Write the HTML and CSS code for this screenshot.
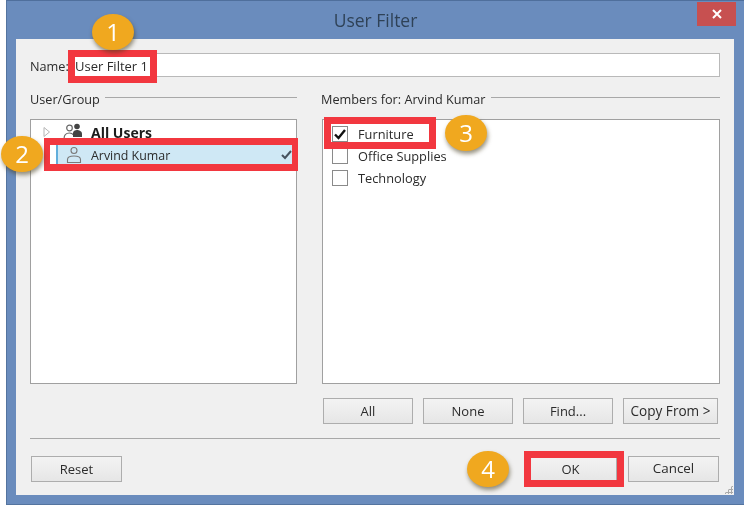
FILE: index.html
```html
<!DOCTYPE html>
<html lang="en">
<head>
<meta charset="utf-8">
<title>User Filter</title>
<link rel="stylesheet" href="styles.css">
</head>
<body>
<div class="window">
  <header class="titlebar">
    <span></span>
    <span class="title">User Filter</span>
    <span class="close">
      <svg width="10" height="10" viewBox="0 0 10 10"><path d="M1 1l8 8M9 1l-8 8" stroke="#fff" stroke-width="2" fill="none"/></svg>
    </span>
  </header>
  <main class="dialog">
    <div class="name-row">
      <label class="name-label">Name:</label>
      <div class="name-input">User Filter 1</div>
    </div>
    <div class="columns">
      <section class="col col-left">
        <div class="legend"><span>User/Group</span><i class="rule"></i></div>
        <div class="list tree">
          <div class="row">
            <svg class="arrow" width="8" height="12" viewBox="0 0 8 12"><path d="M1 1.5l5.5 4.5L1 10.5z" fill="#fff" stroke="#b5b5b5"/></svg>
            <svg class="group-icon" width="22" height="18" viewBox="0 0 22 18"><circle cx="6.5" cy="5" r="2.8" fill="none" stroke="#666" stroke-width="1.2"/><path d="M1 16c0-4 2-6 5.500-6 2 0 3 .6 4 2" fill="none" stroke="#666" stroke-width="1.2"/><circle cx="14" cy="3.500" r="2.800" fill="#444"/><path d="M10 14v-4c0-2 2-3 4-3s5 1 5 4v3z" fill="#444"/></svg>
            <b class="all-users">All Users</b>
          </div>
          <div class="row selected">
            <svg class="user-icon" width="16" height="18" viewBox="0 0 16 18"><circle cx="8" cy="4.500" r="3" fill="none" stroke="#7a7a7a" stroke-width="1.100"/><path d="M1.500 16.500v-3c0-2.500 2.500-3.500 6.500-3.500s6.500 1 6.500 3.500v3z" fill="none" stroke="#7a7a7a" stroke-width="1.100"/></svg>
            <span class="user-name">Arvind Kumar</span>
            <svg class="tick" width="11" height="10" viewBox="0 0 11 10"><path d="M1 5l3 3 6-7" fill="none" stroke="#46525e" stroke-width="2"/></svg>
          </div>
        </div>
      </section>
      <section class="col col-right">
        <div class="legend"><span>Members for: Arvind Kumar</span><i class="rule"></i></div>
        <div class="list members">
          <div class="member"><span class="box"><svg width="14" height="13" viewBox="0 0 14 13"><path d="M2 6.500l3.500 3.500L12 2" fill="none" stroke="#111" stroke-width="2.400"/></svg></span>Furniture</div>
          <div class="member"><span class="box"></span>Office Supplies</div>
          <div class="member"><span class="box"></span>Technology</div>
        </div>
        <div class="member-actions">
          <button class="btn">All</button>
          <button class="btn">None</button>
          <button class="btn">Find...</button>
          <button class="btn btn-copy">Copy From &gt;</button>
        </div>
      </section>
    </div>
    <hr class="separator">
    <footer class="footer">
      <button class="btn btn-reset">Reset</button>
      <div class="footer-right">
        <button class="btn btn-ok">OK</button>
        <button class="btn btn-cancel">Cancel</button>
      </div>
    </footer>
    <div class="grip"></div>
  </main>
</div>

<div class="red red-name"></div>
<div class="red red-user"></div>
<div class="red red-member"></div>
<div class="red red-ok"></div>
<div class="badge badge-1">1</div>
<div class="badge badge-2">2</div>
<div class="badge badge-3">3</div>
<div class="badge badge-4">4</div>
</body>
</html>
```

FILE: styles.css
```css
* { box-sizing: border-box; }
html, body { margin: 0; padding: 0; background: #fff; }
body {
  width: 744px;
  height: 506px;
  overflow: hidden;
  position: relative;
  font-family: "Open Sans", "Noto Sans", sans-serif;
  font-size: 12.7px;
  color: #2b2b2b;
  filter: blur(0.35px);
}
.window {
  margin-left: 6px;
  width: 738px;
  height: 505px;
  background: #6a8cbd;
  border: 1px solid #54749f;
  border-right: 0;
  border-top-color: #4f6f9c;
  display: flex;
  flex-direction: column;
}
.titlebar {
  height: 38px;
  flex: none;
  display: grid;
  grid-template-columns: 1fr auto 1fr;
}
.title {
  font-size: 17.5px;
  color: #2f4257;
  line-height: 38px;
}
.close {
  justify-self: end;
  margin: 1px 8px 0 0;
  width: 39px;
  height: 24px;
  background: #c75050;
  display: flex;
  align-items: center;
  justify-content: center;
}
.dialog {
  position: relative;
  margin-left: 9px;
  width: 718px;
  height: 456px;
  background: #f0f0f0;
  padding: 14px 14px 0;
  display: flex;
  flex-direction: column;
}
.name-row {
  display: flex;
  align-items: center;
  height: 24px;
  gap: 4px;
}
.name-label { width: 38px; flex: none; padding-top: 2px; }
.name-input {
  flex: 1;
  height: 24px;
  border: 1px solid #b9b9b9;
  background: #fff;
  line-height: 24px;
  padding-left: 2px;
  font-size: 13px;
}
.columns {
  display: flex;
  margin-top: 12px;
  gap: 24px;
}
.col-left { width: 267px; flex: none; }
.col-right { flex: 1; }
.legend {
  display: flex;
  align-items: center;
  gap: 5px;
  height: 20px;
  margin-bottom: 10px;
  white-space: nowrap;
}
.rule {
  flex: 1;
  height: 1px;
  background: #a8a8a8;
  margin-top: -4px;
}
.list {
  height: 265px;
  background: #fff;
  border: 1px solid #a0a0a0;
}
.tree { padding: 1px 0 0; }
.row {
  height: 22px;
  display: flex;
  align-items: center;
  position: relative;
}
.arrow { margin-left: 12px; flex: none; }
.group-icon { margin-left: 12px; flex: none; }
.all-users { margin-left: 6px; font-size: 14px; color: #1c1c1c; }
.selected {
  height: 24px;
  margin-left: 25px;
  margin-right: 4px;
  background: #cfe8f5;
  border-left: 2px solid #62aedb;
}
.user-icon { margin-left: 8px; flex: none; }
.user-name { margin-left: 9px; font-size: 12.4px; }
.tick { margin-left: auto; margin-right: 0; }
.members { padding: 3px 0 0 9px; margin-left: 1px; }
.member {
  height: 22px;
  display: flex;
  align-items: center;
  gap: 10px;
  font-size: 12.8px;
}
.box {
  width: 16px;
  height: 16px;
  flex: none;
  border: 1px solid #8a8a8a;
  background: #fff;
  display: flex;
  align-items: center;
  justify-content: center;
}
.member-actions {
  display: flex;
  gap: 10px;
  margin-top: 14px;
  padding-left: 2px;
}
.btn {
  width: 91px;
  height: 26px;
  padding: 0;
  font: inherit;
  font-size: 13px;
  color: #2b2b2b;
  border: 1px solid #adadad;
  background: linear-gradient(#f3f3f3, #e6e6e6);
}
.member-actions .btn { width: 90px; }
.member-actions .btn-copy { width: 95px; font-size: 13.6px; padding-bottom: 2px; }
.separator {
  width: 100%;
  height: 1px;
  margin: 14px 0 0;
  border: 0;
  background: #a8a8a8;
}
.footer {
  display: flex;
  justify-content: space-between;
  margin-top: 17px;
  padding-left: 1px;
  padding-right: 1px;
}
.footer-right { display: flex; gap: 11px; }
.btn-ok { width: 87px; padding-right: 6px; }
.btn-cancel { font-size: 13.4px; padding-bottom: 2px; }
.grip {
  position: absolute;
  right: 1px;
  bottom: 1px;
  width: 9px;
  height: 9px;
  background-image: radial-gradient(#a9a9a9 1px, transparent 1.2px);
  background-size: 3px 3px;
  clip-path: polygon(100% 0, 100% 100%, 0 100%);
}

.red {
  position: absolute;
  border: 7px solid #f2373f;
}
.red-name { left: 68px; top: 50px; width: 89px; height: 33px; }
.red-user { left: 44px; top: 138px; width: 254px; height: 33px; border-width: 7px 6px; }
.red-member { left: 324px; top: 117px; width: 112px; height: 32px; }
.red-ok { left: 524px; top: 451px; width: 100px; height: 36px; }

.badge {
  position: absolute;
  width: 42px;
  height: 36px;
  border-radius: 50%;
  background: #f0a81f;
  box-shadow: 1px 3px 4px rgba(70, 60, 30, 0.55);
  color: #fff;
  font-size: 24px;
  line-height: 36px;
  text-align: center;
}
.badge-1 { left: 92px; top: 14px; }
.badge-2 { left: 1px; top: 136px; }
.badge-3 { left: 445px; top: 115px; }
.badge-4 { left: 467px; top: 451px; }
```
